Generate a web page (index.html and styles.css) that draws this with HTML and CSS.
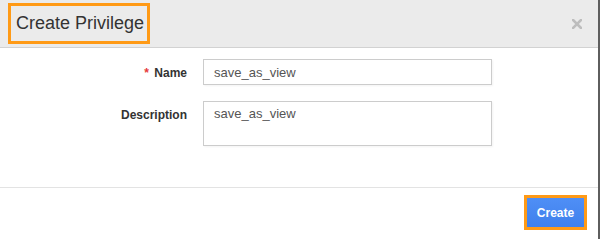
FILE: index.html
```html
<!DOCTYPE html>
<html lang="en">
<head>
  <meta charset="UTF-8" />
  <title>Create Privilege</title>
  <link rel="stylesheet" href="styles.css">
</head>
<body>

  <div class="modal">
    <!-- Header -->
    <div class="modal-header">
      <h3 class="modal-title">Create Privilege</h3>
      <span class="close" title="Close">
        <svg width="10" height="10" viewBox="0 0 10 10">
          <path d="M1 1 L9 9 M9 1 L1 9" stroke="#bdbdbd" stroke-width="2.6" stroke-linecap="square" />
        </svg>
      </span>
    </div>

    <!-- Form -->
    <form class="modal-body">
      <div class="form-row">
        <label class="control-label" for="name"><span class="required">*</span> Name</label>
        <input type="text" id="name" class="form-control" value="save_as_view" />
      </div>
      <div class="form-row">
        <label class="control-label" for="description">Description</label>
        <textarea id="description" class="form-control textarea">save_as_view</textarea>
      </div>
    </form>

    <!-- Footer -->
    <div class="modal-footer">
      <button type="button" class="btn-create">Create</button>
    </div>
  </div>

</body>
</html>
```

FILE: styles.css
```css
body {
  margin: 0;
  font-family: "Liberation Sans", Arial, sans-serif;
  color: #333;
  background: #fff;
}

.modal {
  width: 600px;
  height: 239px;
  box-sizing: border-box;
  border-right: 2px solid #5e5e5e;
  display: flex;
  flex-direction: column;
}

.modal-header {
  height: 47px;
  background: #ebebeb;
  border-bottom: 1px solid #d2d2d2;
  display: flex;
  align-items: center;
  justify-content: space-between;
  padding: 0 16px 0 8px;
}

.modal-title {
  margin: 0;
  height: 35px;
  line-height: 35px;
  padding: 0 3px 0 5px;
  border: 3px solid #ff9a16;
  font-size: 18px;
  font-weight: normal;
  color: #333;
}

.close {
  display: flex;
  margin-top: 1px;
}

.modal-body {
  flex: 1;
  padding-top: 11px;
  display: flex;
  flex-direction: column;
  gap: 16px;
}

.form-row {
  display: flex;
  align-items: flex-start;
  gap: 16px;
}

.control-label {
  width: 187px;
  text-align: right;
  font-size: 12px;
  font-weight: bold;
  padding-top: 6px;
  line-height: 16px;
}

.required {
  color: #e63a3a;
  margin-right: 2px;
}

.form-control {
  width: 289px;
  height: 26px;
  box-sizing: border-box;
  border: 1px solid #ccc;
  border-radius: 0;
  padding: 0 10px;
  font-family: "Liberation Sans", Arial, sans-serif;
  font-size: 13px;
  color: #555;
  box-shadow: 1px 1px 2px rgba(0,0,0,0.05);
  margin: 0;
}

.textarea {
  height: 45px;
  padding: 4px 10px;
  resize: none;
  line-height: 16px;
}

.modal-footer {
  border-top: 1px solid #e3e3e3;
  padding: 7px 11px 0 0;
  height: 52px;
  box-sizing: border-box;
  display: flex;
  justify-content: flex-end;
  align-items: flex-start;
}

.btn-create {
  width: 63px;
  height: 35px;
  border: 3px solid #ff9a16;
  background: linear-gradient(#4f8ff6, #3f80ec);
  color: #fff;
  font-family: "Liberation Sans", Arial, sans-serif;
  font-size: 12px;
  font-weight: bold;
  padding: 0;
  cursor: pointer;
}
```
